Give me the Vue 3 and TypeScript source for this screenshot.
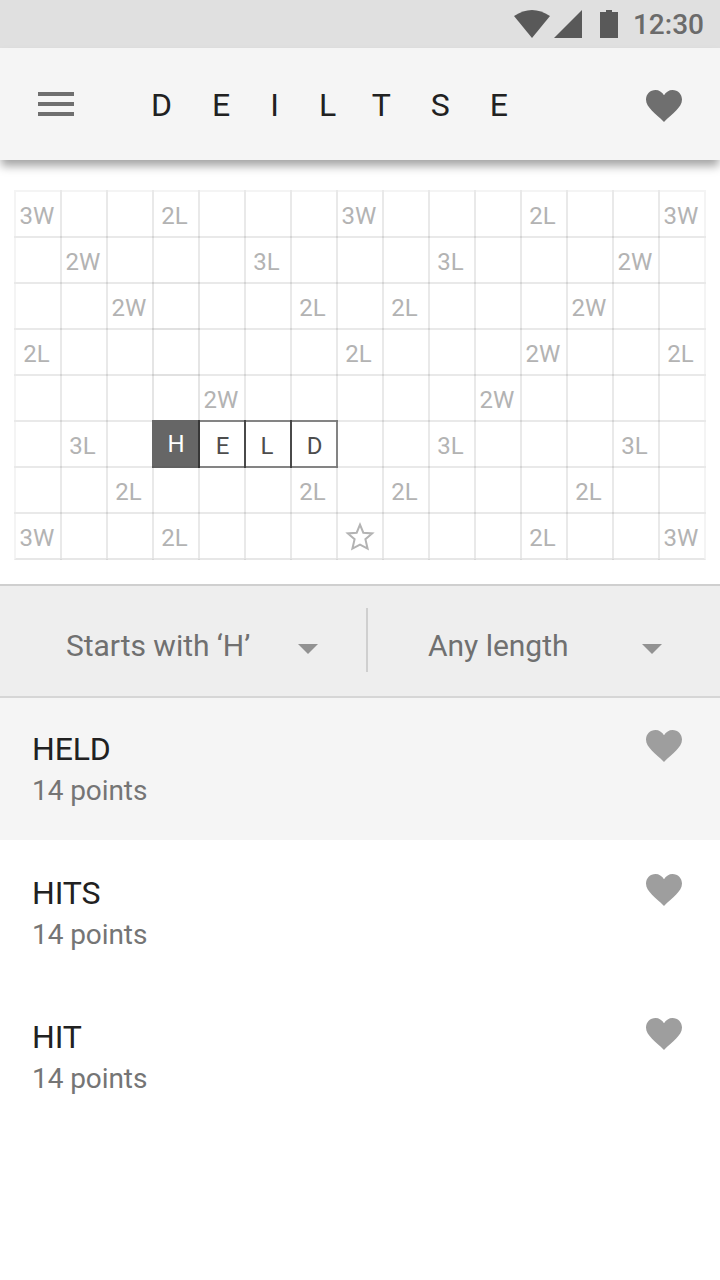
<script setup lang="ts">
const rack = 'DEILTSE'

const board: string[] = [
  '3W|||2L||||3W||||2L|||3W',
  '|2W||||3L||||3L||||2W|',
  '||2W||||2L||2L||||2W||',
  '2L|||||||2L||||2W|||2L',
  '||||2W||||||2W||||',
  '|3L||*H|E|L|D|||3L||||3L|',
  '||2L||||2L||2L||||2L||',
  '3W|||2L||||star||||2L|||3W',
]

const rows: string[][] = board.map((line) => line.split('|').slice(0, 15))

const kind = (cell: string, r: number, c: number): string => {
  if (cell.startsWith('*')) return 'tile active'
  if (/^[A-Z]$/.test(cell)) return `tile letter-${cell.toLowerCase()}`
  if (cell.endsWith('W')) return 'word-bonus'
  if (c === 3 && r >= 2 && r <= 4) return 'shaded'
  return ''
}

interface Result {
  word: string
  points: number
}

const results: Result[] = [
  { word: 'HELD', points: 14 },
  { word: 'HITS', points: 14 },
  { word: 'HIT', points: 14 },
]

const heart =
  'M18 32C9.5 23.6 0 17.5 0 9.6C0 4.2 4 0 9.6 0C12.9 0 16 2 18 5.3C20 2 23.1 0 26.4 0C32 0 36 4.2 36 9.6C36 17.5 26.5 23.6 18 32Z'
</script>

<template>
  <div class="screen">
    <div class="status">
      <svg class="signals" width="106" height="28" viewBox="0 0 106 28">
        <path d="M0 6Q18 -6 36 6L18 28Z" />
        <path d="M68 0V28H40Z" />
        <path d="M86 2H92V0H98V2H104V28H86Z" />
      </svg>
      <span class="clock">12:30</span>
    </div>

    <header class="bar">
      <svg class="menu" width="36" height="24" viewBox="0 0 36 24">
        <path d="M0 0H36V4H0ZM0 10H36V14H0ZM0 20H36V24H0Z" />
      </svg>
      <h1 class="rack">{{ rack }}</h1>
      <svg class="heart" width="36" height="32" viewBox="0 0 36 32"><path :d="heart" /></svg>
    </header>

    <main class="board">
      <template v-for="(row, r) in rows" :key="r">
        <div v-for="(cell, c) in row" :key="c" class="cell" :class="kind(cell, r, c)">
          <svg v-if="cell === 'star'" class="star" width="30" height="30" viewBox="0 0 30 30">
            <path d="M15 3.6L18.3 11.7L27.2 12.4L20.4 18.2L22.6 27.7L15 23.7L7.4 27.7L9.6 18.2L2.8 12.4L11.7 11.7Z" />
          </svg>
          <span v-else>{{ cell.replace('*', '') }}</span>
        </div>
      </template>
    </main>

    <div class="filters">
      <div class="filter first">
        <span>Starts with ‘H’</span>
        <svg width="20" height="10" viewBox="0 0 20 10"><path d="M0 0H20L10 10Z" /></svg>
      </div>
      <div class="filter second">
        <span>Any length</span>
        <svg width="20" height="10" viewBox="0 0 20 10"><path d="M0 0H20L10 10Z" /></svg>
      </div>
    </div>

    <ul class="results">
      <li v-for="(item, i) in results" :key="item.word" :class="{ selected: i === 0 }">
        <div>
          <div class="word">{{ item.word }}</div>
          <div class="points">{{ item.points }} points</div>
        </div>
        <svg class="heart" width="36" height="32" viewBox="0 0 36 32"><path :d="heart" /></svg>
      </li>
    </ul>
  </div>
</template>

<style>
html,
body {
  background: #fff;
  overflow: hidden;
}
</style>

<style scoped>
.screen {
  width: 720px;
  height: 1280px;
  background: #fff;
  font-family: Roboto, 'Liberation Sans', sans-serif;
  overflow: hidden;
}
svg {
  display: block;
  flex: none;
}
.status {
  height: 48px;
  box-sizing: border-box;
  padding-right: 16px;
  display: flex;
  align-items: center;
  justify-content: flex-end;
  background: #e0e0e0;
}
.signals {
  fill: #595959;
  margin-right: 13px;
}
.clock {
  padding-top: 2px;
  font-size: 28px;
  line-height: 46px;
  font-weight: 500;
  color: #6b6b6b;
}
.bar {
  position: relative;
  height: 112px;
  box-sizing: border-box;
  padding: 0 38px;
  display: flex;
  align-items: center;
  background: #f5f5f5;
  box-shadow: 0 7px 9px -1px rgba(0, 0, 0, 0.36);
}
.bar svg {
  fill: #6f6f6f;
}
.rack {
  flex: 1;
  margin: 2px 0 0 77px;
  font-size: 32px;
  line-height: 38px;
  font-weight: 400;
  letter-spacing: 40px;
  color: #212121;
}
.bar .heart {
  margin-top: 4px;
}
.board {
  display: grid;
  grid-template-columns: repeat(15, 46px);
  grid-template-rows: repeat(8, 46px);
  width: 690px;
  margin: 30px 0 0 14px;
  padding-bottom: 26px;
}
.cell {
  width: 48px;
  height: 48px;
  box-sizing: border-box;
  border: 2px solid rgba(0, 0, 0, 0.045);
  display: flex;
  align-items: center;
  justify-content: center;
  font-size: 24px;
  line-height: 28px;
  color: #b3b3b3;
}
.cell span {
  margin: 3px 3px 0 0;
}
.cell.word-bonus span {
  margin-right: 2px;
}
.cell:nth-last-child(-n + 15) {
  border-bottom-color: rgba(0, 0, 0, 0.09);
}
.cell.shaded {
  border-color: rgba(0, 0, 0, 0.06);
}
.cell.tile {
  border-color: rgba(0, 0, 0, 0.46);
  color: #4d4d4d;
}
.tile span {
  margin: 3px 0 0;
}
.letter-e span,
.letter-d span {
  margin-left: 1px;
}
.letter-l span {
  margin-right: 2px;
}
.cell.active {
  background: #666;
  border-color: #666;
  color: #fff;
}
.active span {
  margin: 0;
}
.star {
  fill: none;
  stroke: #b3b3b3;
  stroke-width: 2;
  stroke-miterlimit: 10;
}
.filters {
  height: 114px;
  box-sizing: border-box;
  border-top: 2px solid #cfcfcf;
  border-bottom: 2px solid #d6d6d6;
  background: #eee;
  display: flex;
  align-items: center;
}
.filter {
  height: 64px;
  box-sizing: border-box;
  display: flex;
  align-items: center;
  justify-content: space-between;
  font-size: 30px;
  color: #707070;
  margin-bottom: 2px;
}
.filter span {
  margin-top: 10px;
  letter-spacing: -0.03px;
}
.filter svg {
  fill: #929292;
  margin-top: 18px;
}
.first {
  width: 368px;
  padding: 0 48px 0 66px;
  border-right: 2px solid #cfcfcf;
}
.second {
  flex: 1;
  padding: 0 58px 0 60px;
}
.results {
  list-style: none;
  margin: 0;
  padding: 0;
}
.results li {
  height: 144px;
  box-sizing: border-box;
  padding: 34px 38px 0 32px;
  display: flex;
  justify-content: space-between;
  align-items: flex-start;
}
.results li.selected {
  height: 142px;
  padding-top: 32px;
  background: #f5f5f5;
}
.word {
  font-size: 32px;
  line-height: 38px;
  letter-spacing: -0.15px;
  color: #212121;
}
.points {
  font-size: 28px;
  line-height: 34px;
  margin-top: 6px;
  letter-spacing: -0.08px;
  color: #757575;
}
.results .heart {
  fill: #9e9e9e;
}
</style>
